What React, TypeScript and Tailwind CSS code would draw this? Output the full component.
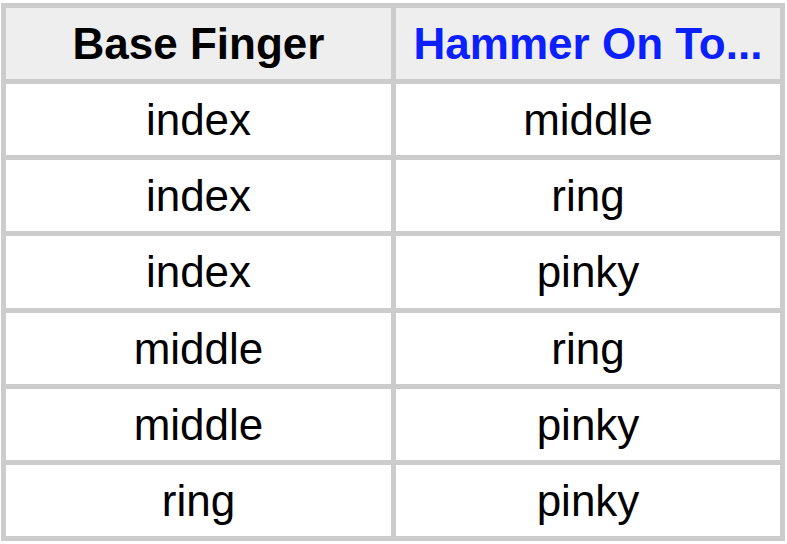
import React from "react";

const rows: [string, string][] = [
  ["index", "middle"],
  ["index", "ring"],
  ["index", "pinky"],
  ["middle", "ring"],
  ["middle", "pinky"],
  ["ring", "pinky"],
];

const heights = ["h-[76px]", "h-[76px]", "h-[77px]", "h-[76px]", "h-[76px]", "h-[76px]"];

export default function App() {
  return (
    <div className="w-[787px] h-[544px] bg-white pt-[3px] pl-[1px]" style={{ fontFamily: '"Liberation Sans", Arial, sans-serif' }}>
      <div className="w-[784px] border-l-[5px] border-t-[5px] border-[#cccccc] flex flex-col">
        <div className="flex h-[76px] bg-[#eeeeee]">
          <div className="w-[390px] h-full border-r-[5px] border-b-[5px] border-[#cccccc] flex items-center justify-center text-[44px] font-bold text-black">
            Base Finger
          </div>
          <div className="w-[389px] h-full border-r-[5px] border-b-[5px] border-[#cccccc] flex items-center justify-center text-[44px] font-bold text-[#0b1fff] whitespace-nowrap">
            Hammer On To...
          </div>
        </div>
        {rows.map(([a, b], i) => (
          <div key={i} className={`flex ${heights[i]}`}>
            <div className="w-[390px] h-full border-r-[5px] border-b-[5px] border-[#cccccc] flex items-center justify-center text-[44px] text-black">
              {a}
            </div>
            <div className="w-[389px] h-full border-r-[5px] border-b-[5px] border-[#cccccc] flex items-center justify-center text-[44px] text-black">
              {b}
            </div>
          </div>
        ))}
      </div>
    </div>
  );
}
